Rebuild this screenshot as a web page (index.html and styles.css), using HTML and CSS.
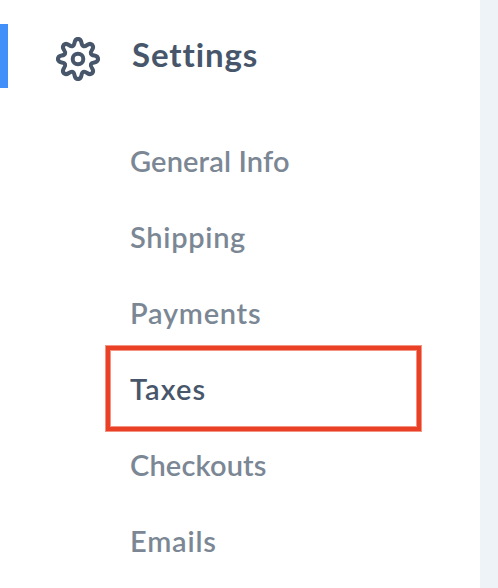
FILE: index.html
```html
<!DOCTYPE html>
<html lang="en">
<head>
<meta charset="utf-8">
<title>Settings</title>
<link rel="stylesheet" href="styles.css">
</head>
<body>
<nav class="sidebar">
  <div class="heading">
    <svg class="gear" viewBox="-23 -23 46 46" aria-hidden="true">
      <defs><path id="tooth" d="M0-20C5-20 2.13-14.27 5.36-12.93C8.59-11.59 10.6-17.68 14.14-14.14"/></defs>
      <use href="#tooth"/>
      <use href="#tooth" transform="rotate(45)"/>
      <use href="#tooth" transform="rotate(90)"/>
      <use href="#tooth" transform="rotate(135)"/>
      <use href="#tooth" transform="rotate(180)"/>
      <use href="#tooth" transform="rotate(225)"/>
      <use href="#tooth" transform="rotate(270)"/>
      <use href="#tooth" transform="rotate(315)"/>
      <circle r="5.3"/>
    </svg>
    <span class="title">Settings</span>
  </div>
  <ul class="menu">
    <li><a class="general">General Info</a></li>
    <li><a class="shipping">Shipping</a></li>
    <li><a class="payments">Payments</a></li>
    <li class="active"><a class="taxes">Taxes</a></li>
    <li><a class="checkouts">Checkouts</a></li>
    <li><a class="emails">Emails</a></li>
  </ul>
</nav>
</body>
</html>
```
FILE: styles.css
```css
* { box-sizing: border-box; }
body {
  margin: 0;
  height: 588px;
  overflow: hidden;
  background: #eef3f7;
  font-family: Lato, sans-serif;
}
.sidebar {
  width: 480px;
  height: 588px;
  padding-top: 24px;
  background: #fff;
}
.heading {
  display: flex;
  align-items: flex-start;
  height: 64px;
  padding-left: 47px;
  border-left: 8px solid #418ff9;
  color: #47566a;
}
.gear {
  width: 46px;
  height: 46px;
  margin-top: 12px;
  fill: none;
  stroke: currentColor;
  stroke-width: 4;
  stroke-linecap: round;
}
.title {
  margin-left: 31px;
  font-size: 33px;
  line-height: 60px;
  font-weight: 700;
  letter-spacing: 0.9px;
}
.menu {
  margin: 36px 0 0;
  padding: 0 0 0 130px;
  list-style: none;
}
.menu li {
  position: relative;
  height: 76px;
  line-height: 73px;
  font-size: 29px;
  font-weight: 600;
  color: #7b8794;
  white-space: nowrap;
}
.menu .general, .menu .checkouts { letter-spacing: 0.15px; }
.menu .shipping { letter-spacing: 0.7px; }
.menu .payments { letter-spacing: 0.75px; }
.menu .taxes { letter-spacing: 1.1px; }
.menu .emails { letter-spacing: 0.8px; }
.menu .active { color: #47566a; }
.active::after {
  content: "";
  box-sizing: border-box;
  position: absolute;
  left: -24px;
  top: -6px;
  width: 315px;
  height: 85px;
  border: 4px solid #ea4025;
  box-shadow: 0 0 0 1px #ea402590, inset 0 0 0 1px #ea402590;
}
```
